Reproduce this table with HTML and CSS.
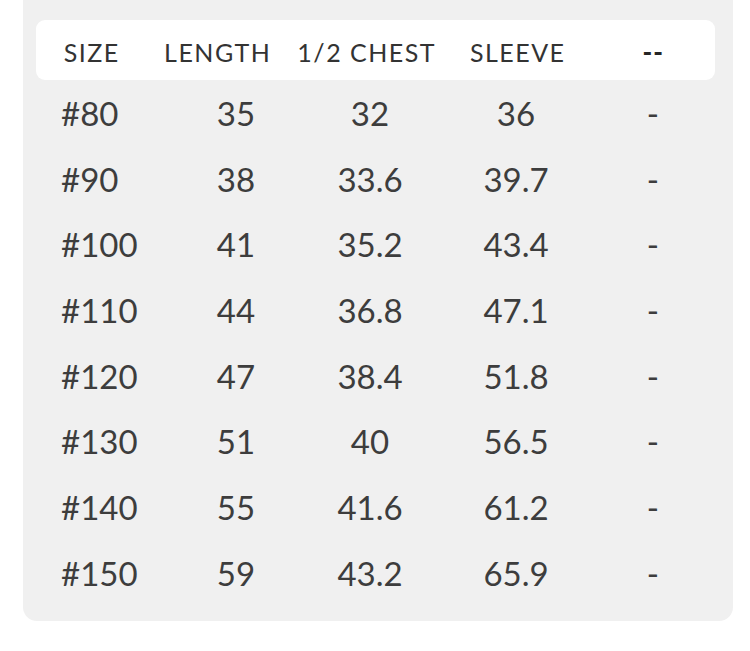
FILE: index.html
```html
<!DOCTYPE html>
<html>
<head>
<meta charset="utf-8">
<link rel="stylesheet" href="styles.css">
</head>
<body>
<div class="panel">
  <div class="head">
    <div class="h">SIZE</div>
    <div class="h">LENGTH</div>
    <div class="h">1/2 CHEST</div>
    <div class="h">SLEEVE</div>
    <div class="h dash">--</div>
  </div>
  <div class="rows">
    <div class="row"><div class="c first">#80</div><div class="c">35</div><div class="c">32</div><div class="c">36</div><div class="c">-</div></div>
    <div class="row"><div class="c first">#90</div><div class="c">38</div><div class="c">33.6</div><div class="c">39.7</div><div class="c">-</div></div>
    <div class="row"><div class="c first">#100</div><div class="c">41</div><div class="c">35.2</div><div class="c">43.4</div><div class="c">-</div></div>
    <div class="row"><div class="c first">#110</div><div class="c">44</div><div class="c">36.8</div><div class="c">47.1</div><div class="c">-</div></div>
    <div class="row"><div class="c first">#120</div><div class="c">47</div><div class="c">38.4</div><div class="c">51.8</div><div class="c">-</div></div>
    <div class="row"><div class="c first">#130</div><div class="c">51</div><div class="c">40</div><div class="c">56.5</div><div class="c">-</div></div>
    <div class="row"><div class="c first">#140</div><div class="c">55</div><div class="c">41.6</div><div class="c">61.2</div><div class="c">-</div></div>
    <div class="row"><div class="c first">#150</div><div class="c">59</div><div class="c">43.2</div><div class="c">65.9</div><div class="c">-</div></div>
  </div>
</div>
</body>
</html>
```
FILE: styles.css
```css
html, body {
  margin: 0;
  padding: 0;
  background: #ffffff;
}
body {
  font-family: "Lato", "Noto Sans", sans-serif;
  color: #333333;
}
.panel {
  margin-left: 23px;
  width: 710px;
  background: #f0f0f0;
  border-radius: 0 0 14px 14px;
  padding: 20px 0 15px 0;
  box-sizing: border-box;
}
.head {
  margin-left: 13px;
  width: 679px;
  height: 60px;
  background: #ffffff;
  border-radius: 9px;
  display: grid;
  grid-template-columns: 110px 142px 156px 146px 125px;
  align-items: center;
  padding-top: 4px;
  box-sizing: border-box;
}
.h {
  text-align: center;
  font-size: 25px;
  font-weight: 400;
  letter-spacing: 1.5px;
  text-indent: 1.5px;
  color: #333333;
}
.dash {
  font-weight: 900;
  font-size: 26px;
  letter-spacing: 1px;
  color: #262626;
}
.rows {
  display: flex;
  flex-direction: column;
}
.row {
  display: grid;
  grid-template-columns: 147px 132px 136px 156px 118px;
  height: 65.7px;
  align-items: center;
}
.c {
  text-align: center;
  font-size: 33px;
  font-weight: 400;
  color: #3d3d3d;
}
.c.first {
  text-align: left;
  padding-left: 38px;
}
```
